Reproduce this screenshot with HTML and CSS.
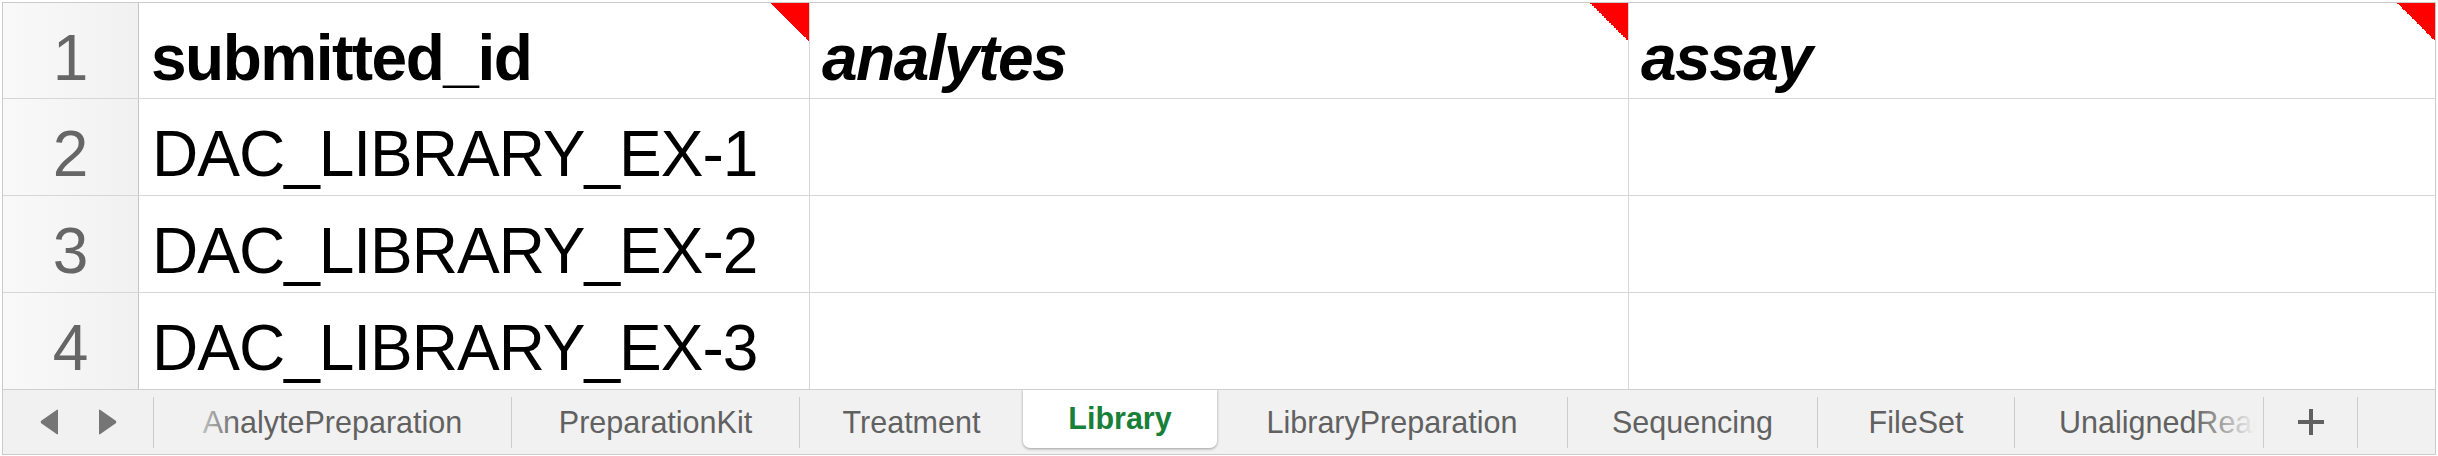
FILE: index.html
```html
<!DOCTYPE html>
<html>
<head>
<meta charset="utf-8">
<link rel="stylesheet" href="styles.css">
</head>
<body>
<div class="sheet">
  <div class="grid">
    <div class="row row-first">
      <div class="rh">1</div>
      <div class="cell col-a hdr">submitted_id<span class="note"></span></div>
      <div class="cell col-b hdr it">analytes<span class="note"></span></div>
      <div class="cell col-c hdr it">assay<span class="note"></span></div>
    </div>
    <div class="row">
      <div class="rh">2</div>
      <div class="cell col-a">DAC_LIBRARY_EX-1</div>
      <div class="cell col-b"></div>
      <div class="cell col-c"></div>
    </div>
    <div class="row">
      <div class="rh">3</div>
      <div class="cell col-a">DAC_LIBRARY_EX-2</div>
      <div class="cell col-b"></div>
      <div class="cell col-c"></div>
    </div>
    <div class="row row-last">
      <div class="rh">4</div>
      <div class="cell col-a">DAC_LIBRARY_EX-3</div>
      <div class="cell col-b"></div>
      <div class="cell col-c"></div>
    </div>
  </div>
  <div class="tabbar">
    <div class="nav">
      <svg class="arrow" width="19" height="26" viewBox="0 0 19 26"><path d="M18 1.5 L18 24.5 Q18 26 16.6 25 L1.2 14.2 Q0 13 1.2 11.8 L16.6 1 Q18 0 18 1.5 Z" fill="#757575"/></svg>
      <svg class="arrow" width="19" height="26" viewBox="0 0 19 26"><path d="M1 1.5 L1 24.5 Q1 26 2.4 25 L17.8 14.2 Q19 13 17.8 11.8 L2.4 1 Q1 0 1 1.5 Z" fill="#757575"/></svg>
    </div>
    <div class="sep"></div>
    <div class="tabs">
      <div class="tab t-analyte">AnalytePreparation</div>
      <div class="sep"></div>
      <div class="tab t-kit">PreparationKit</div>
      <div class="sep"></div>
      <div class="tab t-treat">Treatment</div>
      <div class="tab active">Library</div>
      <div class="tab t-libprep">LibraryPreparation</div>
      <div class="sep"></div>
      <div class="tab t-seq">Sequencing</div>
      <div class="sep"></div>
      <div class="tab t-file">FileSet</div>
      <div class="sep"></div>
      <div class="tab t-clip">UnalignedReads</div>
    </div>
    <div class="sep"></div>
    <div class="add">
      <svg width="26" height="26" viewBox="0 0 26 26"><rect x="11" y="0" width="4" height="26" fill="#616161"/><rect x="0" y="11" width="26" height="4" fill="#616161"/></svg>
    </div>
    <div class="sep"></div>
    <div class="rest"></div>
  </div>
</div>
</body>
</html>
```

FILE: styles.css
```css
* { box-sizing: border-box; }
html, body { margin: 0; padding: 0; background: #ffffff; }
body { font-family: "Liberation Sans", Arial, Helvetica, sans-serif; }

.sheet {
  margin: 2px 0 0 2px;
  width: 2434px;
  height: 453px;
  border: 1px solid #cbcbcb;
  display: flex;
  flex-direction: column;
  overflow: hidden;
}

.grid { display: flex; flex-direction: column; }

.row {
  display: flex;
  height: 97px;
  border-bottom: 1px solid #d6d6d6;
}
.row-first { height: 96px; }
.row-last { height: 96px; border-bottom: none; }

.rh {
  width: 136px;
  flex: none;
  border-right: 1px solid #c4c4c4;
  background: linear-gradient(to right, #f9f9f9, #f1f1f1);
  color: #666666;
  font-size: 64px;
  text-align: center;
  padding-top: 14px;
  line-height: 82px;
}

.cell {
  position: relative;
  flex: none;
  border-right: 1px solid #d6d6d6;
  font-size: 64px;
  color: #000;
  padding: 14px 0 0 13px;
  line-height: 82px;
  letter-spacing: -1px;
  white-space: nowrap;
}
.col-a { width: 671px; }
.col-b { width: 819px; }
.col-c { width: 806px; border-right: none; }

.hdr { font-weight: bold; letter-spacing: -1.5px; padding-left: 12px; }
.it { font-style: italic; }

.note {
  position: absolute;
  top: 0;
  right: 0;
  width: 38px;
  height: 38px;
  background: linear-gradient(to bottom left, #ff0000 50%, transparent 50%);
}

.tabbar {
  flex: 1;
  display: flex;
  align-items: center;
  background: #f1f1f1;
  border-top: 1px solid #cfcfcf;
}

.nav {
  width: 150px;
  height: 100%;
  flex: none;
  display: flex;
  align-items: center;
  padding-left: 37px;
  gap: 39px;
}
.arrow { display: block; }

.sep {
  width: 1px;
  height: 51px;
  flex: none;
  background: #cdcdcd;
}

.tabs {
  position: relative;
  flex: none;
  width: 2109px;
  height: 100%;
  display: flex;
  align-items: center;
  overflow: hidden;
}
.tabs::before {
  content: "";
  position: absolute;
  left: 0;
  top: 0;
  bottom: 0;
  width: 85px;
  background: linear-gradient(to right, rgba(241,241,241,1) 35%, rgba(241,241,241,0));
  z-index: 2;
}
.tabs::after {
  content: "";
  position: absolute;
  right: 0;
  top: 0;
  bottom: 0;
  width: 70px;
  background: linear-gradient(to left, rgba(241,241,241,1) 10%, rgba(241,241,241,0));
  z-index: 2;
}

.tab {
  flex: none;
  height: 100%;
  display: flex;
  align-items: center;
  justify-content: center;
  font-size: 30.5px;
  color: #616161;
  white-space: nowrap;
}
.t-analyte { width: 357px; }
.t-kit { width: 287px; }
.t-treat { width: 223px; }
.active {
  width: 194px;
  height: 59px;
  align-self: flex-start;
  margin-top: -1px;
  background: #ffffff;
  color: #188038;
  font-weight: bold;
  border-radius: 0 0 7px 7px;
  box-shadow: 0 1px 3px rgba(0,0,0,0.35);
  position: relative;
  z-index: 1;
}
.t-libprep { width: 350px; }
.t-seq { width: 249px; }
.t-file { width: 196px; }
.t-clip {
  width: 250px;
  justify-content: flex-start;
  padding-left: 44px;
  overflow: hidden;
}

.add {
  width: 93px;
  height: 100%;
  flex: none;
  display: flex;
  align-items: center;
  justify-content: center;
}
.add svg { display: block; }

.rest { flex: 1; height: 100%; }
```
